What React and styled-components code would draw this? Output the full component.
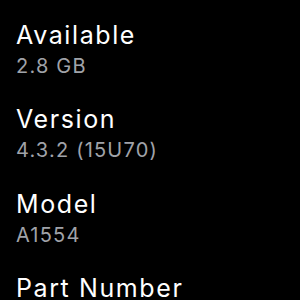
import React from 'react';
import styled, { createGlobalStyle } from 'styled-components';

const GlobalStyle = createGlobalStyle`
  html, body {
    margin: 0;
    padding: 0;
    background: #000;
  }
  body {
    font-family: Inter, "Noto Sans", sans-serif;
    -webkit-font-smoothing: antialiased;
  }
`;

const List = styled.div`
  width: 300px;
  height: 300px;
  overflow: hidden;
  padding: 19.5px 15px 0 16px;
  box-sizing: border-box;
  display: flex;
  flex-direction: column;
  gap: 25.5px;
`;

const Item = styled.div`
  display: flex;
  flex-direction: column;
  flex-shrink: 0;
`;

const Title = styled.div`
  color: #fff;
  font-size: 25px;
  line-height: 30px;
  letter-spacing: 1.6px;
  white-space: nowrap;
`;

const Value = styled.div`
  color: #a0a3a9;
  font-size: 20px;
  line-height: 26px;
  margin-top: 3px;
  letter-spacing: 1.2px;
  white-space: nowrap;
`;

const rows = [
  { title: 'Available', value: '2.8 GB' },
  { title: 'Version', value: '4.3.2 (15U70)' },
  { title: 'Model', value: 'A1554' },
  { title: 'Part Number', value: 'MJ3T2LL/A' },
];

export default function App() {
  return (
    <>
      <GlobalStyle />
      <List>
        {rows.map((r) => (
          <Item key={r.title}>
            <Title>{r.title}</Title>
            <Value>{r.value}</Value>
          </Item>
        ))}
      </List>
    </>
  );
}
